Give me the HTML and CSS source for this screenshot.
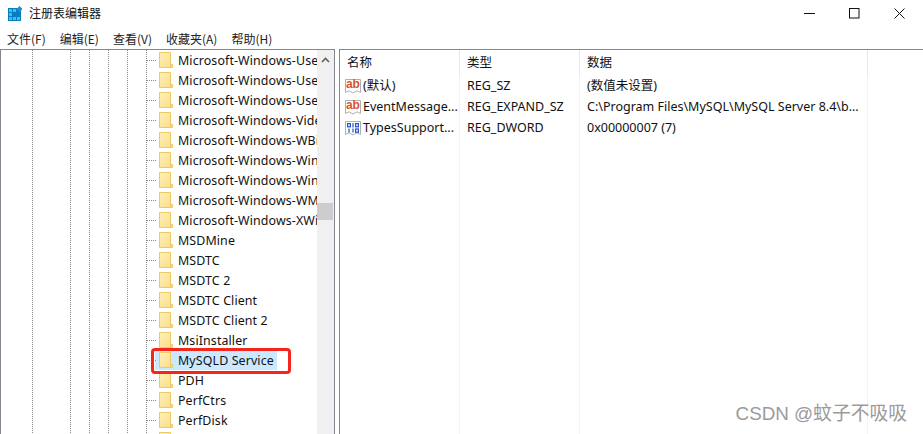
FILE: index.html
```html
<!DOCTYPE html>
<html lang="zh">
<head>
<meta charset="utf-8">
<title>注册表编辑器</title>
<link rel="stylesheet" href="styles.css">
</head>
<body>
<svg class="defs" width="0" height="0" aria-hidden="true">
  <defs>
    <linearGradient id="fg" x1="0" y1="0" x2="1" y2="1">
      <stop offset="0" stop-color="#fff0b8"/>
      <stop offset="1" stop-color="#fbdc85"/>
    </linearGradient>
    <symbol id="folder" viewBox="0 0 14 16">
      <path d="M.5.5H11.5V12.5H13.5V15.5H.5Z" fill="url(#fg)" stroke="#eccb66"/>
      <path d="M11.5 12.5V15.5" stroke="#eccb66"/>
    </symbol>
    <symbol id="doc" viewBox="0 0 16 16">
      <path d="M.5 1.5H15.5V14.5L12 12.8 8 15 4 12.8 .5 14.5Z" fill="#fff" stroke="#b0b0b0"/>
    </symbol>
    <symbol id="docbin" viewBox="0 0 16 16">
      <path d="M.5 1.5H15.5V14.5L12 12.8 8 15 4 12.8 .5 14.5Z" fill="#fff" stroke="#b0b0b0"/>
      <g fill="none" stroke="#2450d0" stroke-width="1.2">
        <rect x="2.6" y="3.6" width="2.8" height="3.2"/>
        <path d="M8 3V7.4"/>
        <rect x="10.6" y="3.6" width="2.8" height="3.2"/>
        <path d="M4 8.4V12.6M8 8.4V12.6"/>
        <rect x="10.6" y="9" width="2.8" height="3.2"/>
      </g>
    </symbol>
  </defs>
</svg>
<div class="window">
  <header class="titlebar">
    <svg class="appicon" width="14" height="15" viewBox="0 0 14 15">
      <rect x="0" y="2" width="13" height="13" fill="#0a7cc0"/>
      <g fill="#35c2f3">
        <rect x="1" y="3" width="3" height="3"/><rect x="5" y="3" width="3" height="3"/>
        <rect x="1" y="7" width="3" height="3"/><rect x="1" y="11" width="3" height="3"/><rect x="5" y="11" width="3" height="3"/><rect x="9" y="11" width="3" height="3"/>
      </g>
      <path d="M11.5 0l3 3-3 3-3-3Z" fill="#1c8ed0"/>
    </svg>
    <span class="title">注册表编辑器</span>
    <div class="controls">
      <svg width="11" height="11" viewBox="0 0 11 11"><path d="M0 5.5H11" stroke="#111"/></svg>
      <svg width="11" height="11" viewBox="0 0 11 11"><rect x=".5" y=".5" width="9.5" height="9.5" fill="none" stroke="#111"/></svg>
      <svg width="11" height="11" viewBox="0 0 11 11"><path d="M.5.5L10.5 10.5M10.5.5L.5 10.5" stroke="#111"/></svg>
    </div>
  </header>
  <nav class="menubar">
    <span>文件(F)</span><span>编辑(E)</span><span>查看(V)</span><span>收藏夹(A)</span><span>帮助(H)</span>
  </nav>
  <main class="panes">
    <section class="tree">
      <div class="tree-view">
        <div class="guides"><i></i><i></i><i></i><i></i><i></i><i></i></div>
        <ul class="nodes">
          <li><svg class="folder"><use href="#folder"/></svg><span>Microsoft-Windows-User Profiles Service</span></li>
          <li><svg class="folder"><use href="#folder"/></svg><span>Microsoft-Windows-User-Loader</span></li>
          <li><svg class="folder"><use href="#folder"/></svg><span>Microsoft-Windows-UserPnp</span></li>
          <li><svg class="folder"><use href="#folder"/></svg><span>Microsoft-Windows-VideoProcessor</span></li>
          <li><svg class="folder"><use href="#folder"/></svg><span>Microsoft-Windows-WBioSrvc</span></li>
          <li><svg class="folder"><use href="#folder"/></svg><span>Microsoft-Windows-WinINet</span></li>
          <li><svg class="folder"><use href="#folder"/></svg><span>Microsoft-Windows-Winlogon</span></li>
          <li><svg class="folder"><use href="#folder"/></svg><span>Microsoft-Windows-WMI</span></li>
          <li><svg class="folder"><use href="#folder"/></svg><span>Microsoft-Windows-XWizards</span></li>
          <li><svg class="folder"><use href="#folder"/></svg><span>MSDMine</span></li>
          <li><svg class="folder"><use href="#folder"/></svg><span>MSDTC</span></li>
          <li><svg class="folder"><use href="#folder"/></svg><span>MSDTC 2</span></li>
          <li><svg class="folder"><use href="#folder"/></svg><span>MSDTC Client</span></li>
          <li><svg class="folder"><use href="#folder"/></svg><span>MSDTC Client 2</span></li>
          <li><svg class="folder"><use href="#folder"/></svg><span>MsiInstaller</span></li>
          <li class="selected"><svg class="folder"><use href="#folder"/></svg><span>MySQLD Service</span></li>
          <li><svg class="folder"><use href="#folder"/></svg><span>PDH</span></li>
          <li><svg class="folder"><use href="#folder"/></svg><span>PerfCtrs</span></li>
          <li><svg class="folder"><use href="#folder"/></svg><span>PerfDisk</span></li>
          <li><svg class="folder"><use href="#folder"/></svg><span>PerfNet</span></li>
        </ul>
        <div class="highlight"></div>
      </div>
      <div class="scrollbar">
        <svg class="arrow" width="9" height="6" viewBox="0 0 9 6"><path d="M1 5L4.5 1.5 8 5" fill="none" stroke="#606060" stroke-width="1.6"/></svg>
        <div class="thumb"></div>
      </div>
    </section>
    <section class="values">
      <div class="row head">
        <div class="c-name">名称</div><div class="c-type">类型</div><div class="c-data">数据</div><div class="c-rest"></div>
      </div>
      <div class="row">
        <div class="c-name"><svg class="vicon"><use href="#doc"/></svg><b class="ab">ab</b><span>(默认)</span></div>
        <div class="c-type">REG_SZ</div><div class="c-data">(数值未设置)</div><div class="c-rest"></div>
      </div>
      <div class="row">
        <div class="c-name"><svg class="vicon"><use href="#doc"/></svg><b class="ab">ab</b><span>EventMessage...</span></div>
        <div class="c-type">REG_EXPAND_SZ</div><div class="c-data">C:\Program Files\MySQL\MySQL Server 8.4\b...</div><div class="c-rest"></div>
      </div>
      <div class="row">
        <div class="c-name"><svg class="vicon"><use href="#docbin"/></svg><span>TypesSupport...</span></div>
        <div class="c-type">REG_DWORD</div><div class="c-data">0x00000007 (7)</div><div class="c-rest"></div>
      </div>
      <div class="row fill">
        <div class="c-name"></div><div class="c-type"></div><div class="c-data"></div><div class="c-rest"></div>
      </div>
      <div class="watermark">CSDN @蚊子不吸吸</div>
    </section>
  </main>
</div>
</body>
</html>
```
FILE: styles.css
```css
* { box-sizing: border-box; }
html, body { margin: 0; height: 100%; }
body {
  width: 923px; height: 434px; overflow: hidden; background: #fff; color: #111;
  font: 13px/20px "Noto Sans CJK SC", "Liberation Sans", sans-serif;
}
.defs { position: absolute; }
.window { display: flex; flex-direction: column; height: 434px; }
.titlebar { height: 28px; display: flex; align-items: center; padding-left: 8px; }
.appicon { flex: none; margin-top: -2px; }
.title { margin-left: 7px; font-size: 12px; margin-top: -2px; }
.controls { margin-left: auto; display: flex; gap: 34px; padding-right: 18px; margin-top: -2px; }
.menubar { height: 21px; display: flex; padding: 1px 0 0 7px; font-size: 12px; line-height: 20px; color: #222; }
.menubar span { margin-right: 14px; }
.panes { flex: 1; display: flex; gap: 4px; min-height: 0; overflow: hidden; }
.tree { width: 335px; display: flex; border: 1px solid #828790; border-width: 1px 1px 0 1px; }
.tree-view { position: relative; flex: 1; min-width: 0; overflow: hidden; }
.guides { position: absolute; inset: 0; }
.guides i { position: absolute; top: 0; bottom: 0; width: 1px; background: repeating-linear-gradient(#888 0 1px, transparent 1px 2px); }
.guides i:nth-child(1) { left: 31px; }
.guides i:nth-child(2) { left: 69px; }
.guides i:nth-child(3) { left: 88px; }
.guides i:nth-child(4) { left: 107px; }
.guides i:nth-child(5) { left: 126px; }
.guides i:nth-child(6) { left: 145px; }
.nodes { position: relative; list-style: none; margin: 0; padding: 0; }
.nodes li { height: 20px; display: flex; align-items: center; padding-left: 146px; white-space: nowrap; font: 12.4px/20px "Noto Sans", "Liberation Sans", sans-serif; letter-spacing: .12px; color: #111; }
.nodes li span { padding-top: 2px; }
.nodes li::before { content: ""; width: 10px; height: 1px; flex: none; background: repeating-linear-gradient(90deg, #888 0 1px, transparent 1px 2px); margin-right: 2px; }
.folder { width: 14px; height: 16px; flex: none; margin-right: 5px; }
.nodes li.selected { background: linear-gradient(#cce8ff, #cce8ff) 154px 0 / 122px 100% no-repeat; }
.highlight { position: absolute; left: 150px; top: 298px; width: 140px; height: 26px; border: 3px solid #f4261c; border-radius: 4px; }
.scrollbar { position: relative; width: 17px; flex: none; background: #f0f0f0; display: flex; flex-direction: column; align-items: center; padding-right: 1px; }
.arrow { margin-top: 7px; }
.thumb { position: absolute; left: 0; right: 1px; top: 153px; height: 17px; background: #cdcdcd; }
.values { position: relative; flex: 1; min-width: 0; display: flex; flex-direction: column; border: 1px solid #828790; border-width: 1px 0 0 1px; font: 12.5px/20px "Noto Sans", "Noto Sans CJK SC", sans-serif; color: #111; }
.row { display: flex; height: 21px; flex: none; line-height: 22px; }
.row.head { height: 25px; line-height: 25px; }
.row.fill { flex: 1; }
.row > div { border-right: 1px solid #e5e9ee; white-space: nowrap; overflow: hidden; }
.row:not(.head) > div { border-right-color: #eef4fa; }
.c-name { width: 120px; padding-left: 7px; display: flex; align-items: center; position: relative; }
.c-type { width: 120px; padding-left: 7px; }
.c-data { width: 288px; padding-left: 7px; }
.c-rest { flex: 1; border-right: 0 !important; }
.row:not(.head) .c-name { padding-left: 5px; }
.vicon { width: 16px; height: 16px; flex: none; margin-right: 2px; }
.ab { position: absolute; left: 6px; top: 3px; font: bold 12px/13px "Liberation Sans", sans-serif; color: #d9532c; letter-spacing: -.2px; }
.watermark { position: absolute; right: 16px; bottom: 10px; font: 18.8px/20px "Liberation Sans", "Noto Sans CJK SC", sans-serif; color: #9a9a9a; }
```
